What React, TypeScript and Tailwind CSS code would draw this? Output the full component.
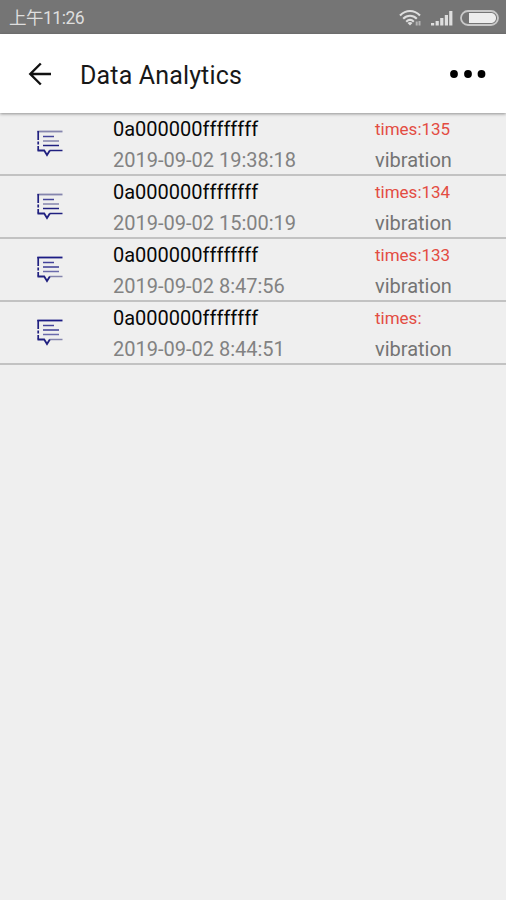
/**
 * Data analytics screen: list of recorded vibration events
 */

interface EventItem {
  deviceId: string;
  time: string;
  times: string;
  type: string;
}

const events: EventItem[] = [
  { deviceId: '0a000000ffffffff', time: '2019-09-02 19:38:18', times: '135', type: 'vibration' },
  { deviceId: '0a000000ffffffff', time: '2019-09-02 15:00:19', times: '134', type: 'vibration' },
  { deviceId: '0a000000ffffffff', time: '2019-09-02 8:47:56', times: '133', type: 'vibration' },
  { deviceId: '0a000000ffffffff', time: '2019-09-02 8:44:51', times: '', type: 'vibration' },
];

function WifiIcon() {
  return (
    <svg width="24" height="18" viewBox="0 0 24 18" fill="none" stroke="#dedede" strokeWidth="2.1">
      <path d="M1 6.5C7 0.5 15 0.5 21 6.5" />
      <path d="M4.2 9.7C8.2 5.7 13.8 5.7 17.8 9.7" />
      <path d="M7.2 12.7C9.6 10.4 12.4 10.4 14.8 12.7" />
      <path d="M8.5 14L11 16.5L13.5 14C12 12.7 10 12.7 8.5 14Z" fill="#dedede" stroke="none" />
      <path d="M17.7 12.5V16.5M20.5 12V16.5" stroke="#b4b4b4" strokeWidth="2" />
    </svg>
  );
}

function SignalIcon() {
  return (
    <svg width="22" height="16" viewBox="0 0 22 16" fill="#dedede">
      <rect x="0" y="13" width="3.2" height="2.5" />
      <rect x="4.6" y="11" width="3.2" height="4.5" />
      <rect x="9.2" y="8" width="3.2" height="7.5" />
      <rect x="13.8" y="5" width="3.2" height="10.5" />
      <rect x="18.2" y="1" width="3.2" height="14.5" />
    </svg>
  );
}

function BatteryIcon() {
  return (
    <svg width="39" height="16" viewBox="0 0 39 16">
      <rect x="1" y="1" width="37" height="14" rx="7" fill="none" stroke="#c9c9c9" strokeWidth="1.8" />
      <path d="M9 3H31C34 3 36 5.2 36 8C36 10.8 34 13 31 13H9Z" fill="#ededed" />
    </svg>
  );
}

function MessageIcon({ dark }: { dark: boolean }) {
  return (
    <svg width="26" height="28" viewBox="0 0 26 28" fill="none" stroke="#202080" strokeWidth="1.5">
      <path d="M0.3 2.5H25.5" strokeWidth="1.8" className={dark ? 'stroke-[#1c1c85]' : 'stroke-[#8585ad]'} />
      <path d="M1.2 2V11M1.2 12.5V15.5M1.2 17V21.5" strokeWidth="1.7" />
      <path d="M12.5 21.5H25.5" className={dark ? 'stroke-[#8585ad]' : 'stroke-[#202080]'} />
      <path d="M0.5 21.5H7.2L10 26L12.8 21.5" strokeWidth="1.8" />
      <path d="M6 7.5H17" stroke="#44449a" />
      <path d="M6 12H22" className={dark ? 'stroke-[#3c3c95]' : 'stroke-[#8585ad]'} />
      <path d="M6 16.5H22" className={dark ? 'stroke-[#6a6aab]' : 'stroke-[#202080]'} />
    </svg>
  );
}

function EventRow({ event, dark }: { event: EventItem; dark: boolean }) {
  return (
    <div className="flex h-[63px] border-b-2 border-[#c2c2c2]">
      <div className="w-[113px] pl-[37px] pt-[16px]">
        <MessageIcon dark={dark} />
      </div>
      <div className="w-[262px] pt-px text-[20px] leading-[31px]">
        <p className="text-[#080808]">{event.deviceId}</p>
        <p className="text-[#828282]">{event.time}</p>
      </div>
      <div className="pt-px leading-[31px]">
        <p className="text-[17px] text-[#e34c42]">times:{event.times}</p>
        <p className="text-[20px] text-[#747474]">{event.type}</p>
      </div>
    </div>
  );
}

export default function App() {
  return (
    <div className="flex h-[900px] w-[506px] flex-col overflow-hidden bg-[#efefef] font-[Roboto,'Noto_Sans_CJK_SC',sans-serif]">
      {/* Status bar */}
      <div className="flex h-[34px] shrink-0 items-center bg-[#757575] pl-[9px] pr-[7px] pt-[2px] text-[#dedede]">
        <span className="flex-1 text-[17.5px] leading-[32px] tracking-[-0.5px]">上午11:26</span>
        <WifiIcon />
        <span className="ml-[8px]">
          <SignalIcon />
        </span>
        <span className="ml-[7px]">
          <BatteryIcon />
        </span>
      </div>

      {/* Header */}
      <header className="z-10 flex h-[79px] shrink-0 items-center bg-white pl-[28px] pr-[20px] shadow-[0_1px_3px_rgba(0,0,0,0.4)]">
        <svg width="24" height="24" viewBox="0 0 24 24" fill="none" stroke="#111111" strokeWidth="2.4">
          <path d="M23 12H2M12.8 1.5L2.3 12L12.8 22.5" />
        </svg>
        <h1 className="ml-[28px] flex-1 pt-[4px] text-[25px] leading-[32px] tracking-[0.15px] text-[#181818]">
          Data Analytics
        </h1>
        <svg width="36" height="8" viewBox="0 0 36 8" fill="#000000">
          <circle cx="4" cy="4" r="3.9" />
          <circle cx="18" cy="4" r="3.9" />
          <circle cx="31.5" cy="4" r="3.9" />
        </svg>
      </header>

      {/* Events */}
      <main className="flex-1">
        {events.map((event, i) => (
          <EventRow key={event.time} event={event} dark={i > 1} />
        ))}
      </main>
    </div>
  );
}
